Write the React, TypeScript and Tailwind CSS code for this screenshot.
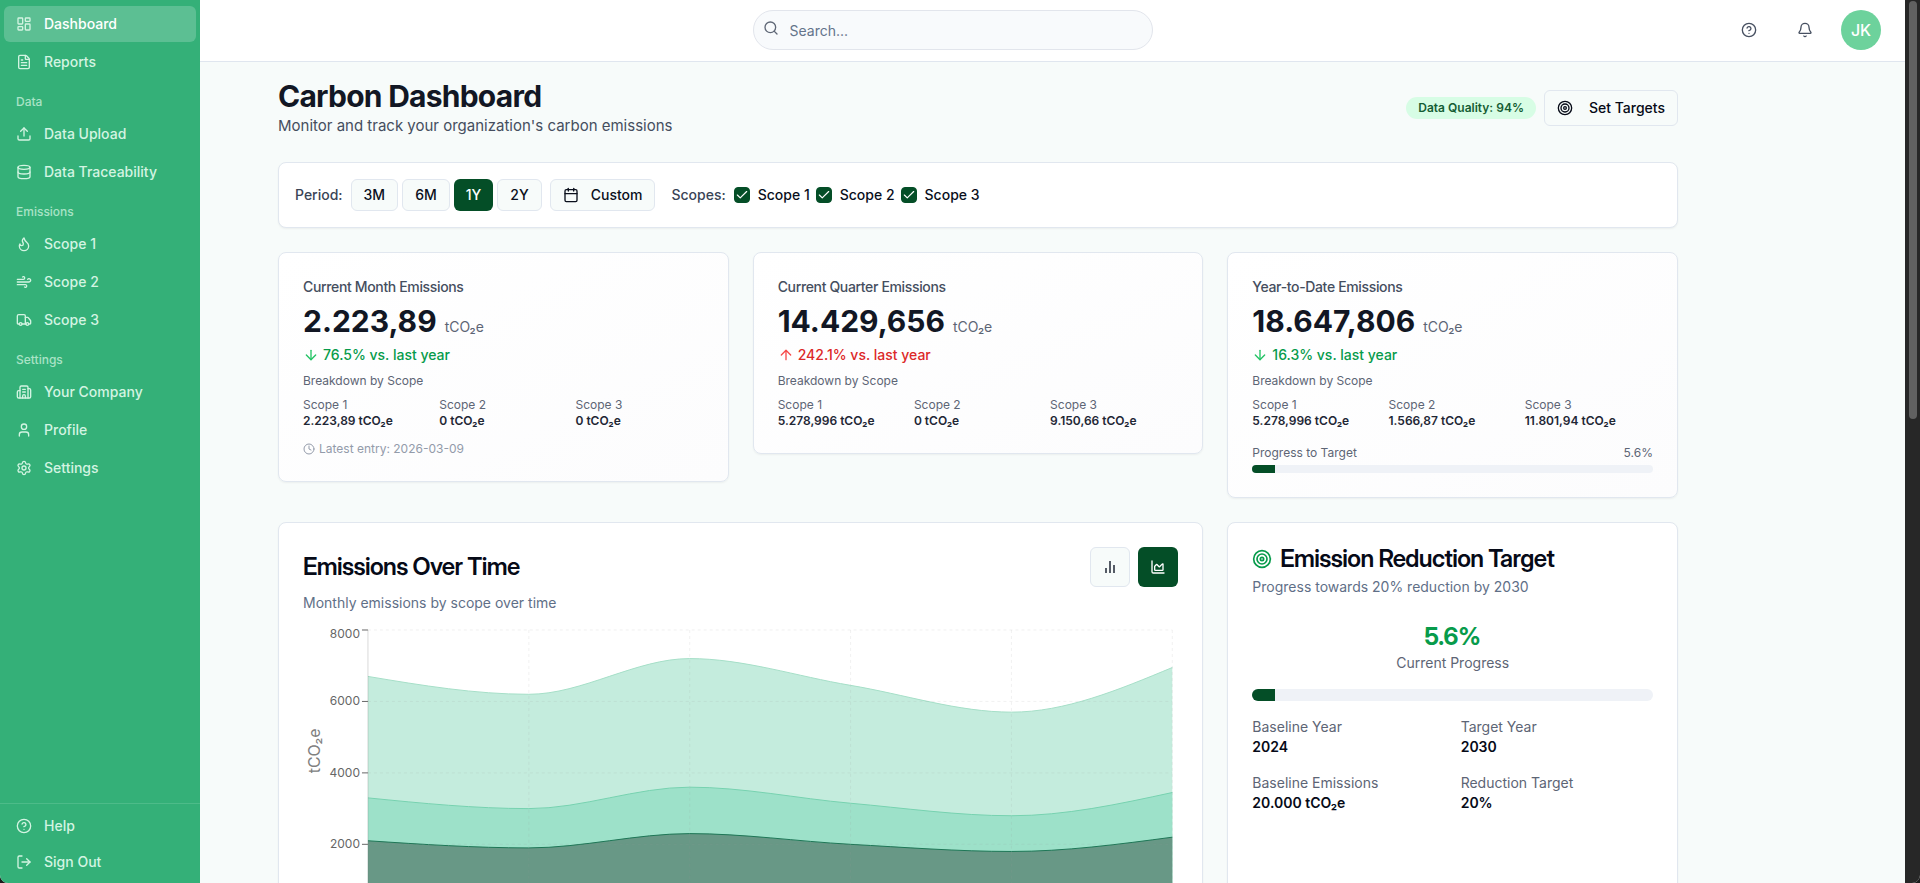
import React, { useId } from "react";
import {
  ArrowDown,
  ArrowUp,
  Bell,
  Calendar,
  Check,
  CircleHelp,
  Clock,
  Database,
  FileText,
  Flame,
  LayoutDashboard,
  LogOut,
  Search,
  Settings,
  Target,
  Truck,
  Upload,
  User,
  Wind,
  Building2,
} from "lucide-react";

type IconType = React.ComponentType<{ className?: string; strokeWidth?: number }>;

type NavEntry = { label: string; icon: IconType; active?: boolean };

const navGroups: { title?: string; items: NavEntry[] }[] = [
  {
    items: [
      { label: "Dashboard", icon: LayoutDashboard, active: true },
      { label: "Reports", icon: FileText },
    ],
  },
  {
    title: "Data",
    items: [
      { label: "Data Upload", icon: Upload },
      { label: "Data Traceability", icon: Database },
    ],
  },
  {
    title: "Emissions",
    items: [
      { label: "Scope 1", icon: Flame },
      { label: "Scope 2", icon: Wind },
      { label: "Scope 3", icon: Truck },
    ],
  },
  {
    title: "Settings",
    items: [
      { label: "Your Company", icon: Building2 },
      { label: "Profile", icon: User },
      { label: "Settings", icon: Settings },
    ],
  },
];

function NavLink({ label, icon: Icon, active }: NavEntry) {
  return (
    <a
      href="#"
      aria-current={active ? "page" : undefined}
      className={
        active
          ? "flex h-9 items-center gap-3 rounded-md bg-white/20 px-3 text-sm font-medium text-white"
          : "flex h-9 items-center gap-3 rounded-md px-3 text-sm font-medium text-[#d3f4e2]"
      }
    >
      <Icon className="size-4 text-[#d3f4e2]" strokeWidth={2} />
      {label}
    </a>
  );
}

function Sidebar() {
  return (
    <aside className="flex w-[200px] shrink-0 flex-col bg-[#34b078]">
      <nav className="flex flex-1 flex-col px-1 pt-1.5">
        {navGroups.map((group, i) => (
          <div key={i} className="flex flex-col">
            {group.title && (
              <h2 className="px-3 pt-3.5 pb-1.5 text-xs font-medium text-[#a9e3c6]">{group.title}</h2>
            )}
            <div className="flex flex-col gap-0.5">
              {group.items.map((item) => (
                <NavLink key={item.label} {...item} />
              ))}
            </div>
          </div>
        ))}
      </nav>
      <div className="flex flex-col border-t border-[#4dbb89] px-1 pt-1 pb-[3px]">
        <NavLink label="Help" icon={CircleHelp} />
        <NavLink label="Sign Out" icon={LogOut} />
      </div>
    </aside>
  );
}

function TopBar() {
  return (
    <header className="flex h-[62px] shrink-0 items-start gap-6 border-b border-[#e0e6ef] bg-white pt-2.5 pr-6">
      <div className="flex flex-1 justify-center">
        <div className="flex h-10 w-full max-w-[400px] items-center gap-[11px] rounded-full border border-[#e2e5ec] bg-[#f8fafc] px-[9px]">
          <Search className="mb-1 size-4 shrink-0 text-[#5f6776]" strokeWidth={2} />
          <input
            type="text"
            aria-label="Search"
            placeholder="Search..."
            className="h-8 w-full bg-transparent text-sm outline-none placeholder:text-[#64748b]"
          />
        </div>
      </div>
      <div className="flex items-center gap-4">
        <button type="button" aria-label="Help" className="flex size-10 items-center justify-center text-[#475061]">
          <CircleHelp className="size-4" strokeWidth={2} />
        </button>
        <button type="button" aria-label="Notifications" className="flex size-10 items-center justify-center text-[#475061]">
          <Bell className="size-4" strokeWidth={2} />
        </button>
        <button
          type="button"
          aria-label="Account JK"
          className="flex size-10 items-center justify-center rounded-full bg-[#6dd29c] text-base font-medium text-white"
        >
          JK
        </button>
      </div>
    </header>
  );
}

function FilterBar() {
  const periods = ["3M", "6M", "1Y", "2Y"];
  const scopes = ["Scope 1", "Scope 2", "Scope 3"];
  return (
    <section className="flex items-center gap-4 rounded-lg border border-[#e1e7ef] bg-white p-4 text-sm font-medium shadow-xs">
      <div className="flex items-center gap-2">
        <span className="text-[#3a4456]">Period:</span>
        <div className="flex gap-1">
          {periods.map((p) => (
            <button
              key={p}
              type="button"
              aria-pressed={p === "1Y"}
              className={
                p === "1Y"
                  ? "h-8 rounded-md bg-[#044e27] px-3 text-white"
                  : "h-8 rounded-md border border-[#e1e7ef] bg-[#f7fbfa] px-3 text-[#0a0f1c]"
              }
            >
              {p}
            </button>
          ))}
        </div>
        <button
          type="button"
          className="flex h-8 items-center gap-3 rounded-md border border-[#e1e7ef] bg-[#f7fbfa] px-3 text-[#0a0f1c]"
        >
          <Calendar className="size-4" strokeWidth={2} />
          Custom
        </button>
      </div>
      <div className="flex items-center gap-2">
        <span className="text-[#3a4456]">Scopes:</span>
        <div className="flex items-center gap-1.5">
          {scopes.map((s) => (
            <ScopeToggle key={s} label={s} />
          ))}
        </div>
      </div>
    </section>
  );
}

function ScopeToggle({ label }: { label: string }) {
  const id = useId();
  return (
    <div className="flex items-center gap-2">
      <span className="relative flex size-4">
        <input
          id={id}
          type="checkbox"
          defaultChecked
          className="peer size-4 appearance-none rounded-sm border border-[#044e27] checked:bg-[#044e27]"
        />
        <Check
          className="pointer-events-none absolute inset-0 m-auto hidden size-3.5 text-white peer-checked:block"
          strokeWidth={2}
        />
      </span>
      <label htmlFor={id} className="text-[#0a0f1c]">
        {label}
      </label>
    </div>
  );
}

type Metric = {
  title: string;
  value: string;
  change: string;
  up?: boolean;
  scopes: string[];
  latest?: string;
  progress?: number;
};

const metrics: Metric[] = [
  {
    title: "Current Month Emissions",
    value: "2.223,89",
    change: "76.5% vs. last year",
    scopes: ["2.223,89", "0", "0"],
    latest: "2026-03-09",
  },
  {
    title: "Current Quarter Emissions",
    value: "14.429,656",
    change: "242.1% vs. last year",
    up: true,
    scopes: ["5.278,996", "0", "9.150,66"],
  },
  {
    title: "Year-to-Date Emissions",
    value: "18.647,806",
    change: "16.3% vs. last year",
    scopes: ["5.278,996", "1.566,87", "11.801,94"],
    progress: 5.6,
  },
];

function ProgressBar({ value, thick }: { value: number; thick?: boolean }) {
  return (
    <div
      role="progressbar"
      aria-valuenow={value}
      aria-label="Progress"
      className={
        thick
          ? "h-3 w-full overflow-hidden rounded-full bg-[#eff2f7]"
          : "h-2 w-full overflow-hidden rounded-full bg-[#eff2f7]"
      }
    >
      <div className="h-full bg-[#044e27]" style={{ width: `${value}%` }} />
    </div>
  );
}

function MetricCard({ title, value, change, up, scopes, latest, progress }: Metric) {
  return (
    <article className="rounded-lg border border-[#e1e7ef] bg-linear-to-br from-white to-[#fcfcfd] p-6 text-xs text-[#5d6575] shadow-xs">
      <h3 className="text-sm font-medium tracking-tight text-[#454e5e]">{title}</h3>
      <p className="mt-1.5 flex items-baseline gap-2 text-sm">
        <span className="text-3xl font-bold text-[#121724]">{value}</span>
        tCO₂e
      </p>
      <p
        className={
          up
            ? "mt-1.5 flex items-center gap-1 text-sm font-medium text-[#dc2828]"
            : "mt-1.5 flex items-center gap-1 text-sm font-medium text-[#079b4b]"
        }
      >
        {up ? (
          <ArrowUp className="size-4 text-[#f64b4b]" strokeWidth={2} />
        ) : (
          <ArrowDown className="size-4 text-[#22c364]" strokeWidth={2} />
        )}
        {change}
      </p>
      <p className="mt-2">Breakdown by Scope</p>
      <dl className="mt-2 grid grid-cols-3 gap-2">
        {scopes.map((s, i) => (
          <div key={i}>
            <dt>Scope {i + 1}</dt>
            <dd className="font-semibold text-[#1f2735]">{s} tCO₂e</dd>
          </div>
        ))}
      </dl>
      {latest && (
        <p className="mt-3 flex items-center gap-1 text-[#939baa]">
          <Clock className="size-3" strokeWidth={2} />
          Latest entry: {latest}
        </p>
      )}
      {progress !== undefined && (
        <div className="mt-4 flex flex-col gap-1">
          <div className="flex justify-between">
            <span>Progress to Target</span>
            <span>{progress}%</span>
          </div>
          <ProgressBar value={progress} />
        </div>
      )}
    </article>
  );
}

/* ---- stacked area chart ---- */

const plot = { left: 65, top: 5, width: 805, height: 286, max: 8000 };
const ticks = [2000, 4000, 6000, 8000];
const stacks = [
  { totals: [6700, 6200, 7200, 6450, 5700, 6950], fill: "#c4ecdd", stroke: "#a6dfc8" },
  { totals: [3300, 3000, 3600, 3150, 2800, 3450], fill: "#9de1c9", stroke: "#76d2b0" },
  { totals: [2100, 1900, 2300, 2000, 1800, 2200], fill: "#689886", stroke: "#1e7656" },
];

const px = (i: number) => plot.left + (i * plot.width) / 5;
const py = (v: number) => plot.top + plot.height * (1 - v / plot.max);

function smoothPath(values: number[]) {
  const pts = values.map((v, i) => [px(i), py(v)]);
  const n = pts.length;
  const step = plot.width / 5;
  const slope = pts.slice(1).map((p, i) => (p[1] - pts[i][1]) / step);
  const tangent = pts.map((_, i) => {
    if (i === 0 || i === n - 1) return 0;
    const a = slope[i - 1];
    const b = slope[i];
    return (Math.sign(a) + Math.sign(b)) * Math.min(Math.abs(a), Math.abs(b), Math.abs(a + b) / 4) || 0;
  });
  tangent[0] = (3 * slope[0] - tangent[1]) / 2;
  tangent[n - 1] = (3 * slope[n - 2] - tangent[n - 2]) / 2;
  let d = `M${pts[0][0]},${pts[0][1]}`;
  for (let i = 1; i < n; i++) {
    const [x0, y0] = pts[i - 1];
    const [x1, y1] = pts[i];
    const k = step / 3;
    d += `C${x0 + k},${y0 + k * tangent[i - 1]} ${x1 - k},${y1 - k * tangent[i]} ${x1},${y1}`;
  }
  return d;
}

function EmissionsChart() {
  const bottom = plot.top + plot.height;
  const right = plot.left + plot.width;
  return (
    <svg
      viewBox="0 0 876 330"
      className="block w-full"
      role="img"
      aria-label="Monthly emissions by scope"
      fontFamily="Inter, sans-serif"
    >
      {stacks.map((s, i) => (
        <g key={i}>
          <path d={`${smoothPath(s.totals)}L${right},${bottom}L${plot.left},${bottom}Z`} fill={s.fill} />
          <path d={smoothPath(s.totals)} fill="none" stroke={s.stroke} />
        </g>
      ))}
      <g stroke="#999999" strokeOpacity="0.14" strokeDasharray="3 3">
        {ticks.map((v) => (
          <path key={v} d={`M${plot.left},${py(v)}H${right}`} />
        ))}
        {[1, 2, 3, 4, 5].map((i) => (
          <path key={i} d={`M${px(i)},${plot.top}V${bottom}`} />
        ))}
      </g>
      <path d={`M${plot.left},${plot.top}V${bottom}`} stroke="#666666" strokeOpacity="0.25" />
      {ticks.map((v) => (
        <g key={v}>
          <path d={`M${plot.left - 6},${py(v)}h6`} stroke="#666666" />
          <text x={plot.left - 8} y={py(v) + (v === 8000 ? 8 : 4)} textAnchor="end" fontSize="12" fill="#666666">
            {v}
          </text>
        </g>
      ))}
      <text transform="translate(17 126) rotate(-90)" textAnchor="middle" fontSize="16" fill="#808080">
        tCO₂e
      </text>
    </svg>
  );
}

function BarsIcon() {
  return (
    <svg viewBox="0 0 16 16" className="size-4" fill="none" stroke="currentColor" strokeWidth="2" aria-hidden="true">
      <path d="M4 9v5M8 2v12M12 6v8" />
    </svg>
  );
}

function AreaIcon() {
  return (
    <svg
      viewBox="0 0 24 24"
      className="size-4"
      fill="none"
      stroke="currentColor"
      strokeWidth="2"
      strokeLinecap="round"
      strokeLinejoin="round"
      aria-hidden="true"
    >
      <path d="M3 3v16a2 2 0 0 0 2 2h16" />
      <path d="M7 11.2a.5.5 0 0 1 .15-.35l2.5-2.5a.5.5 0 0 1 .7 0l3.3 3.3a.5.5 0 0 0 .7 0l4.3-4.3a.5.5 0 0 1 .85.35V16a1 1 0 0 1-1 1H8a1 1 0 0 1-1-1z" />
    </svg>
  );
}

function EmissionsOverTime() {
  return (
    <section className="col-span-2 rounded-lg border border-[#e1e7ef] bg-white p-6 shadow-xs">
      <div className="flex items-center justify-between">
        <h2 className="font-['Inter_Display',Inter,sans-serif] text-2xl font-semibold tracking-tight text-[#060a17]">
          Emissions Over Time
        </h2>
        <div className="flex gap-2">
          <button
            type="button"
            aria-label="Bar chart"
            className="flex size-10 items-center justify-center rounded-md border border-[#e1e7ef] bg-[#f7fbfa] text-[#555b66]"
          >
            <BarsIcon />
          </button>
          <button
            type="button"
            aria-label="Area chart"
            aria-pressed="true"
            className="flex size-10 items-center justify-center rounded-md bg-[#044e27] text-white"
          >
            <AreaIcon />
          </button>
        </div>
      </div>
      <p className="mt-1.5 mb-3 text-sm text-[#5f6f87]">Monthly emissions by scope over time</p>
      <EmissionsChart />
    </section>
  );
}

function ReductionTarget() {
  const facts = [
    ["Baseline Year", "2024"],
    ["Target Year", "2030"],
    ["Baseline Emissions", "20.000 tCO₂e"],
    ["Reduction Target", "20%"],
  ];
  return (
    <section className="rounded-lg border border-[#e1e7ef] bg-white p-6 text-sm shadow-xs">
      <h2 className="flex items-center gap-2 font-['Inter_Display',Inter,sans-serif] text-2xl leading-none font-semibold tracking-tight text-[#060a17]">
        <Target className="size-5 text-[#079b4b]" strokeWidth={2} />
        Emission Reduction Target
      </h2>
      <p className="mt-1.5 text-[#5f6f87]">Progress towards 20% reduction by 2030</p>
      <div className="mt-6 mb-4 text-center">
        <p className="font-['Inter_Display',Inter,sans-serif] text-2xl font-bold text-[#079b4b]">5.6%</p>
        <p className="text-[#5d6575]">Current Progress</p>
      </div>
      <ProgressBar value={5.6} thick />
      <dl className="mt-4 grid grid-cols-2 gap-4">
        {facts.map(([name, value]) => (
          <div key={name}>
            <dt className="text-[#5d6575]">{name}</dt>
            <dd className="font-semibold text-[#060a17]">{value}</dd>
          </div>
        ))}
      </dl>
    </section>
  );
}

export default function App() {
  return (
    <div className="h-screen bg-[#1b1b1b]">
      <div className="flex h-full overflow-hidden rounded-b-lg bg-[#f7fbfa] font-[Inter,sans-serif] text-[#060a17]">
        <Sidebar />
        <div className="flex min-w-0 flex-1 flex-col">
          <TopBar />
          <main className="flex-1 overflow-hidden pt-4 pr-6 pl-[78px]">
            <div className="flex w-full max-w-[1400px] flex-col gap-6">
              <div className="flex items-center justify-between">
                <div>
                  <h1 className="text-3xl font-bold tracking-tight text-[#121724]">Carbon Dashboard</h1>
                  <p className="text-[15px] leading-6 text-[#454e5e]">
                    Monitor and track your organization's carbon emissions
                  </p>
                </div>
                <div className="flex items-center gap-2">
                  <span className="rounded-full bg-[#d7fde5] px-3 py-[3px] text-xs font-semibold text-[#155d34]">
                    Data Quality: 94%
                  </span>
                  <button
                    type="button"
                    className="flex h-9 items-center gap-4 rounded-md border border-[#e1e7ef] bg-[#f7fbfa] px-3 text-sm font-medium text-[#060a17]"
                  >
                    <Target className="size-4" strokeWidth={2} />
                    Set Targets
                  </button>
                </div>
              </div>
              <FilterBar />
              <div className="grid grid-cols-3 items-start gap-6">
                {metrics.map((m) => (
                  <MetricCard key={m.title} {...m} />
                ))}
              </div>
              <div className="grid grid-cols-3 gap-6">
                <EmissionsOverTime />
                <ReductionTarget />
              </div>
            </div>
          </main>
        </div>
        <div aria-hidden="true" className="w-[15px] shrink-0 bg-[#272727] px-1 pt-px">
          <div className="h-[418px] w-2 rounded-full bg-[#616161]" />
        </div>
      </div>
    </div>
  );
}
